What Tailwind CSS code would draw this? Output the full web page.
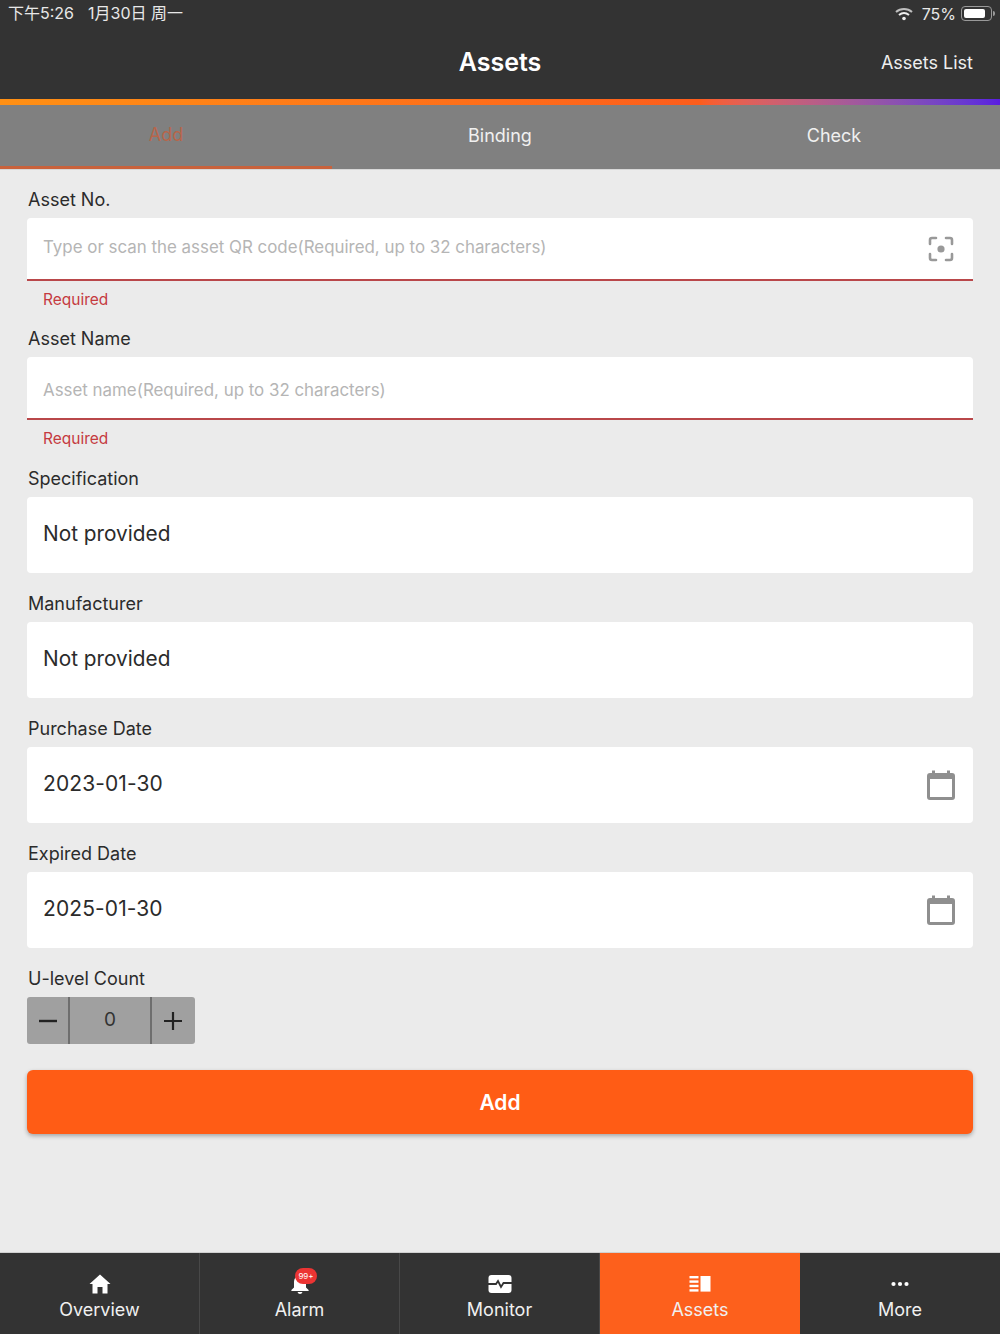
<!DOCTYPE html>
<html lang="en">
<head>
  <meta charset="UTF-8" />
  <meta name="viewport" content="width=device-width, initial-scale=1.0" />
  <title>Assets</title>
  <script src="https://cdn.jsdelivr.net/npm/@tailwindcss/browser@4"></script>
</head>
<body class="bg-[#ebebeb] text-[#2b2b2b] font-['Inter','Noto_Sans_CJK_SC',sans-serif]">
<div class="flex flex-col h-[1334px] w-[1000px] overflow-hidden">

  <!-- Status bar + header -->
  <header class="bg-[#333333] text-white h-[99px] flex flex-col shrink-0">
    <div class="h-[27px] pl-[8px] flex items-center justify-between text-[16px] text-[#e8e8e8]">
      <div class="flex gap-[14px] pb-[2px]"><span>下午5:26</span><span>1月30日 周一</span></div>
      <div class="flex items-center">
        <svg class="w-[18px] h-[14px] mr-[9px]" viewBox="0 0 18 14" fill="none" stroke="#eeeeee" stroke-width="2">
          <path d="M1 5 C5.5 1 12.5 1 17 5" opacity="0.75"/>
          <path d="M4 8 C7 5.5 11 5.5 14 8"/>
          <circle cx="9" cy="11.5" r="1.8" fill="#eeeeee" stroke="none"/>
        </svg>
        <span class="mr-[5px]">75%</span>
        <div class="w-[31px] h-[15px] border border-[#999999] rounded-[4px] p-[2px] mr-[1px]">
          <div class="w-[21px] h-full bg-white rounded-[2px]"></div>
        </div>
        <div class="w-[2px] h-[5px] bg-[#999999] rounded-r-sm mr-[5px]"></div>
      </div>
    </div>
    <div class="relative flex-1 flex items-center justify-center">
      <h1 class="text-[25px] font-semibold">Assets</h1>
      <a class="absolute right-[27px] top-[22px] text-[18px] text-[#eeeeee]">Assets List</a>
    </div>
  </header>
  <div class="h-[6px] shrink-0 bg-gradient-to-r from-[#ff9014] via-[#fd5d1c] via-70% to-[#5a1ce0]"></div>

  <!-- Tabs -->
  <nav class="h-[65px] shrink-0 bg-[#808080] flex text-[18px] text-[#f0f0f0] border-b border-[#d8d8d8]">
    <a class="w-[332px] flex items-center justify-center border-b-[3px] border-[#c9623c] text-[#b8654a] pb-[3px]">Add</a>
    <a class="w-[336px] flex items-center justify-center pb-[3px]">Binding</a>
    <a class="flex-1 flex items-center justify-center pb-[3px]">Check</a>
  </nav>

  <!-- Form -->
  <main class="px-[27px] pt-[17px] flex flex-col">
    <label class="h-[25px] mb-[6px] pl-px flex items-center text-[18px]">Asset No.</label>
    <div class="h-[63px] bg-white rounded-t-[4px] border-b-2 border-[#b9474a] pl-[16px] pr-[19px] flex items-center justify-between">
      <span class="text-[16.9px] text-[#b5b5b5] pb-[2px]">Type or scan the asset QR code(Required, up to 32 characters)</span>
      <svg class="w-[26px] h-[26px]" viewBox="0 0 26 26" fill="none" stroke="#999999" stroke-width="2.6" stroke-linecap="round" stroke-linejoin="round">
        <path d="M2 8 V4 Q2 2 4 2 H8 M18 2 H22 Q24 2 24 4 V8 M24 18 V22 Q24 24 22 24 H18 M8 24 H4 Q2 24 2 22 V18"/>
        <circle cx="13" cy="13" r="3.6" fill="#999999" stroke="none"/>
      </svg>
    </div>
    <p class="h-[36px] pl-[16px] pt-[2px] flex items-center text-[15.5px] text-[#c53a3f]">Required</p>

    <label class="mt-[9px] h-[25px] mb-[6px] pl-px flex items-center text-[18px]">Asset Name</label>
    <div class="h-[63px] bg-white rounded-t-[4px] border-b-2 border-[#b9474a] pl-[16px] flex items-center">
      <span class="text-[16.9px] text-[#b5b5b5] pt-[6px]">Asset name(Required, up to 32 characters)</span>
    </div>
    <p class="h-[36px] pl-[16px] pt-[2px] flex items-center text-[15.5px] text-[#c53a3f]">Required</p>

    <label class="mt-[10px] h-[25px] mb-[6px] pl-px flex items-center text-[18px]">Specification</label>
    <div class="h-[76px] bg-white rounded-[4px] pl-[16px] pb-[3px] flex items-center text-[20.8px]">Not provided</div>

    <label class="mt-[18px] h-[25px] mb-[6px] pl-px flex items-center text-[18px]">Manufacturer</label>
    <div class="h-[76px] bg-white rounded-[4px] pl-[16px] pb-[3px] flex items-center text-[20.8px]">Not provided</div>

    <label class="mt-[18px] h-[25px] mb-[6px] pl-px flex items-center text-[18px]">Purchase Date</label>
    <div class="h-[76px] bg-white rounded-[4px] pl-[16px] pr-[18px] flex items-center justify-between text-[21px] tracking-[0.1px]">
      <span class="pb-[2px]">2023-01-30</span>
      <svg class="w-[28px] h-[30px]" viewBox="0 0 28 30">
        <path fill="#8f8f8f" d="M5 0.5 h3 v2.5 h12 v-2.5 h3 v2.5 h2 q3 0 3 3 v21 q0 3 -3 3 h-22 q-3 0 -3 -3 v-21 q0 -3 3 -3 h2 z"/>
        <rect x="3" y="9" width="22" height="18" fill="#ffffff"/>
      </svg>
    </div>

    <label class="mt-[18px] h-[25px] mb-[6px] pl-px flex items-center text-[18px]">Expired Date</label>
    <div class="h-[76px] bg-white rounded-[4px] pl-[16px] pr-[18px] flex items-center justify-between text-[21px] tracking-[0.1px]">
      <span class="pb-[2px]">2025-01-30</span>
      <svg class="w-[28px] h-[30px]" viewBox="0 0 28 30">
        <path fill="#8f8f8f" d="M5 0.5 h3 v2.5 h12 v-2.5 h3 v2.5 h2 q3 0 3 3 v21 q0 3 -3 3 h-22 q-3 0 -3 -3 v-21 q0 -3 3 -3 h2 z"/>
        <rect x="3" y="9" width="22" height="18" fill="#ffffff"/>
      </svg>
    </div>

    <label class="mt-[18px] h-[25px] mb-[6px] pl-px flex items-center text-[18px]">U-level Count</label>
    <div class="w-[168px] h-[47px] bg-[#a0a0a0] rounded-[3px] flex items-center">
      <div class="w-[43px] h-full flex items-center justify-center border-r-2 border-[#6e6e6e]">
        <svg class="w-[20px] h-[20px]" viewBox="0 0 20 20" stroke="#222222" stroke-width="2.4"><path d="M1 10 H19"/></svg>
      </div>
      <div class="flex-1 text-center text-[19px] text-[#333333]">0</div>
      <div class="w-[45px] h-full pr-px flex items-center justify-center border-l-2 border-[#6e6e6e]">
        <svg class="w-[20px] h-[20px]" viewBox="0 0 20 20" stroke="#222222" stroke-width="2.2"><path d="M1 10 H19 M10 1 V19"/></svg>
      </div>
    </div>

    <button class="mt-[26px] h-[64px] pt-px rounded-[6px] bg-[#ff5c15] text-white text-[21px] font-semibold shadow-[0_2px_4px_rgba(0,0,0,0.3)]">Add</button>
  </main>

  <!-- Bottom tabs -->
  <footer class="mt-auto h-[82px] shrink-0 bg-[#333333] border-t border-[#d0d0d0] grid grid-cols-5 text-[18px] text-[#f0f0f0]">
    <a class="flex flex-col items-center pt-[21px] border-r border-[#484848]">
      <svg class="w-[22px] h-[20px] mb-[5px]" viewBox="0 0 22 20" fill="#ffffff"><path d="M11 0.5 L21.5 10 H18.5 V19.5 H13.5 V13 H8.5 V19.5 H3.5 V10 H0.5 Z"/></svg>
      <span class="leading-[22px]">Overview</span>
    </a>
    <a class="relative flex flex-col items-center pt-[21px] border-r border-[#484848]">
      <svg class="w-[20px] h-[20px] mb-[5px]" viewBox="0 0 20 20" fill="#ffffff"><path d="M10 0.5 q1.4 0 1.4 1.4 q4.6 1.2 4.6 6 v5.6 l2.6 2.6 v0.9 h-17.2 v-0.9 l2.6 -2.6 v-5.6 q0 -4.8 4.6 -6 q0 -1.4 1.4 -1.4 z M7.5 18 h5 q-0.6 2 -2.5 2 q-1.9 0 -2.5 -2 z"/></svg>
      <span class="leading-[22px]">Alarm</span>
      <span class="absolute left-[95px] top-[15px] w-[22px] h-[16px] rounded-full bg-[#ec3433] text-white text-[8px] flex items-center justify-center">99+</span>
    </a>
    <a class="flex flex-col items-center pt-[21px] border-r border-[#484848]">
      <svg class="w-[24px] h-[20px] mb-[5px]" viewBox="0 0 24 20"><rect x="0.5" y="1" width="23" height="18" rx="3" fill="#ffffff"/><path d="M0 10 H8 L10 7 L13 13 L15.5 9 H24" fill="none" stroke="#333333" stroke-width="1.8"/></svg>
      <span class="leading-[22px]">Monitor</span>
    </a>
    <a class="flex flex-col items-center pt-[21px] bg-[#fd601c]">
      <svg class="w-[22px] h-[20px] mb-[5px]" viewBox="0 0 22 20" fill="#ffffff"><rect x="0.5" y="2" width="9" height="2.4"/><rect x="0.5" y="6.4" width="9" height="2.4"/><rect x="0.5" y="10.8" width="9" height="2.4"/><rect x="0.5" y="15.2" width="9" height="2.4"/><rect x="11.5" y="2" width="10" height="15.6"/></svg>
      <span class="leading-[22px]">Assets</span>
    </a>
    <a class="flex flex-col items-center pt-[21px]">
      <svg class="w-[20px] h-[20px] mb-[5px]" viewBox="0 0 20 20" fill="#ffffff"><circle cx="3.5" cy="10" r="2.1"/><circle cx="10" cy="10" r="2.1"/><circle cx="16.5" cy="10" r="2.1"/></svg>
      <span class="leading-[22px]">More</span>
    </a>
  </footer>
</div>
</body>
</html>
